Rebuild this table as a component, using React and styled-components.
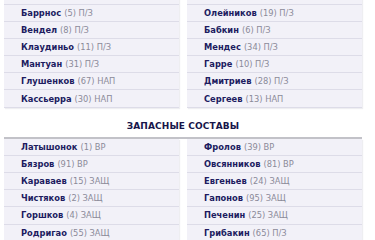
import React from "react";
import styled, { createGlobalStyle } from "styled-components";

const Global = createGlobalStyle`
  html, body { margin: 0; padding: 0; background: #ffffff; }
  body { font-family: "DejaVu Sans", "Open Sans", sans-serif; overflow: hidden; }
`;

const Page = styled.div`
  width: 358px;
  margin: -12.7px 0 0 4px;
`;

const Lineup = styled.div`
  display: grid;
  grid-template-columns: 175px 175px;
  column-gap: 8px;
  border-top: ${(p) => (p.$ruled ? "2px solid #c2c2c8" : "none")};
`;

const Column = styled.ul`
  list-style: none;
  margin: 0;
  padding: 0;
  background: #f2f1f8;
  box-shadow: 1px 1px 1px rgba(40, 40, 80, 0.08);
`;

const Row = styled.li`
  box-sizing: border-box;
  height: 17.2px;
  display: flex;
  align-items: center;
  padding-left: 17px;
  border-bottom: 1px solid #dddce8;
  font-size: 8.3px;
  white-space: nowrap;
`;

const Name = styled.span`
  font-weight: 700;
  color: #201b60;
`;

const Info = styled.span`
  color: #8b8a98;
  margin-left: 3px;
`;

const Heading = styled.h3`
  margin: 0;
  padding: 12px 0 5px;
  line-height: 12px;
  text-align: center;
  font-size: 9px;
  font-weight: 700;
  color: #17154a;
  letter-spacing: 0.1px;
`;

const main = [
  [
    ["Сантос", "(3) ЗАЩ"],
    ["Баррнос", "(5) П/З"],
    ["Вендел", "(8) П/З"],
    ["Клаудиньо", "(11) П/З"],
    ["Мантуан", "(31) П/З"],
    ["Глушенков", "(67) НАП"],
    ["Кассьерра", "(30) НАП"],
  ],
  [
    ["Дзюба", "(22) ЗАЩ"],
    ["Олейников", "(19) П/З"],
    ["Бабкин", "(6) П/З"],
    ["Мендес", "(34) П/З"],
    ["Гарре", "(10) П/З"],
    ["Дмитриев", "(28) П/З"],
    ["Сергеев", "(13) НАП"],
  ],
];

const subs = [
  [
    ["Латышонок", "(1) ВР"],
    ["Бязров", "(91) ВР"],
    ["Караваев", "(15) ЗАЩ"],
    ["Чистяков", "(2) ЗАЩ"],
    ["Горшков", "(4) ЗАЩ"],
    ["Родригао", "(55) ЗАЩ"],
  ],
  [
    ["Фролов", "(39) ВР"],
    ["Овсянников", "(81) ВР"],
    ["Евгеньев", "(24) ЗАЩ"],
    ["Гапонов", "(95) ЗАЩ"],
    ["Печенин", "(25) ЗАЩ"],
    ["Грибакин", "(65) П/З"],
  ],
];

function Team({ players }) {
  return (
    <Column>
      {players.map(([n, i]) => (
        <Row key={n}>
          <Name>{n}</Name>
          <Info>{i}</Info>
        </Row>
      ))}
    </Column>
  );
}

export default function App() {
  return (
    <>
      <Global />
      <Page>
        <Lineup>
          <Team players={main[0]} />
          <Team players={main[1]} />
        </Lineup>
        <Heading>ЗАПАСНЫЕ СОСТАВЫ</Heading>
        <Lineup $ruled>
          <Team players={subs[0]} />
          <Team players={subs[1]} />
        </Lineup>
      </Page>
    </>
  );
}
